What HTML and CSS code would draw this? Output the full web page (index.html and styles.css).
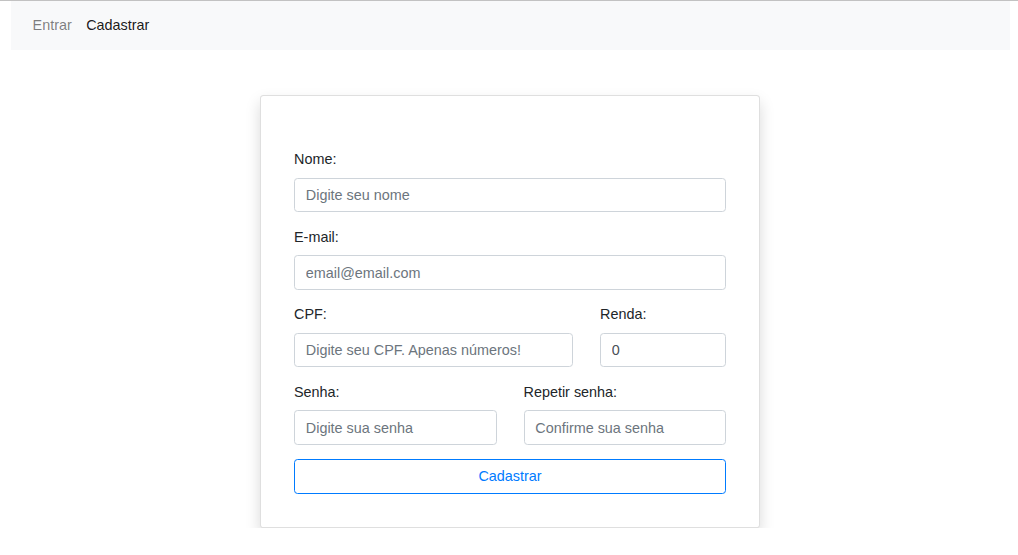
FILE: index.html
```html
<!DOCTYPE html>
<html lang="pt-br">
<head>
<meta charset="utf-8">
<title>Cadastrar</title>
<link rel="stylesheet" href="styles.css">
</head>
<body>
<div class="topline"></div>
<nav class="navbar">
  <a class="nav-link" href="#">Entrar</a>
  <a class="nav-link active" href="#">Cadastrar</a>
</nav>
<main class="page">
  <div class="card">
    <form class="form">
      <div class="form-group">
        <label>Nome:</label>
        <input class="form-control" type="text" placeholder="Digite seu nome">
      </div>
      <div class="form-group">
        <label>E-mail:</label>
        <input class="form-control" type="email" placeholder="email@email.com">
      </div>
      <div class="form-row row-cpf">
        <div class="form-group">
          <label>CPF:</label>
          <input class="form-control" type="text" placeholder="Digite seu CPF. Apenas números!">
        </div>
        <div class="form-group">
          <label>Renda:</label>
          <input class="form-control" type="text" value="0">
        </div>
      </div>
      <div class="form-row row-half">
        <div class="form-group">
          <label>Senha:</label>
          <input class="form-control" type="password" placeholder="Digite sua senha">
        </div>
        <div class="form-group">
          <label>Repetir senha:</label>
          <input class="form-control" type="password" placeholder="Confirme sua senha">
        </div>
      </div>
      <button type="button" class="btn">Cadastrar</button>
    </form>
  </div>
</main>
</body>
</html>
```

FILE: styles.css
```css
* { box-sizing: border-box; }
html, body {
  margin: 0;
  padding: 0;
  background: #fff;
}
body {
  font-family: "Liberation Sans", Arial, sans-serif;
  font-size: 14.4px;
  line-height: 1.5;
  color: #212529;
}
.topline {
  height: 1px;
  background: #c2c2c2;
}
.navbar {
  display: flex;
  align-items: center;
  height: 49px;
  margin: 0 8px 0 11px;
  padding: 0 14.4px;
  background: #f8f9fa;
}
.nav-link {
  padding: 7.2px;
  color: rgba(0, 0, 0, .5);
  text-decoration: none;
}
.nav-link.active {
  color: rgba(0, 0, 0, .9);
}
.page {
  display: flex;
  justify-content: center;
  padding-top: 45px;
  padding-left: 2px;
}
.card {
  width: 500px;
  background: #fff;
  border: 1px solid rgba(0, 0, 0, .125);
  border-radius: 3.6px;
  box-shadow: 0 7.2px 14.4px rgba(0, 0, 0, .15);
  padding: 53px 33px 33px;
}
.form-group {
  display: flex;
  flex-direction: column;
  margin-bottom: 14.4px;
}
label {
  display: block;
  margin-bottom: 7.2px;
  line-height: 21.6px;
}
.form-control {
  display: block;
  width: 100%;
  height: 34.4px;
  padding: 5.4px 10.8px;
  font-family: inherit;
  font-size: 14.4px;
  line-height: 21.6px;
  color: #495057;
  background: #fff;
  border: 1px solid #ced4da;
  border-radius: 3.6px;
  outline: none;
}
.form-control::placeholder {
  color: #6c757d;
  opacity: 1;
}
.form-row {
  display: grid;
  column-gap: 27px;
}
.row-cpf {
  grid-template-columns: calc((100% + 27px) * 2 / 3 - 27px) 1fr;
}
.row-half {
  grid-template-columns: 1fr 1fr;
}
.btn {
  display: block;
  width: 100%;
  height: 34.4px;
  padding: 5.4px 10.8px;
  font-family: inherit;
  font-size: 14.4px;
  line-height: 21.6px;
  color: #007bff;
  background: transparent;
  border: 1px solid #007bff;
  border-radius: 3.6px;
  cursor: pointer;
}
```
